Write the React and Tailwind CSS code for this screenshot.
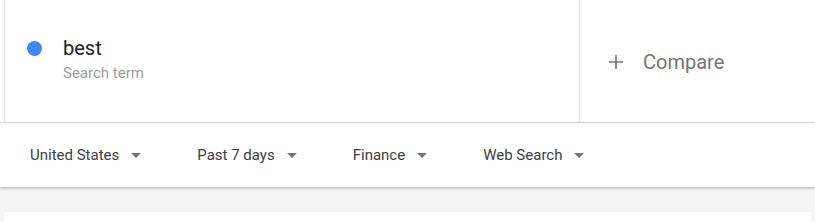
import React from "react";

function Arrow() {
  return (
    <svg width="10" height="5" viewBox="0 0 10 5" className="ml-[12px] shrink-0">
      <path d="M0 0 L10 0 L5 5 Z" fill="#757575" />
    </svg>
  );
}

function Filter({ label }) {
  return (
    <div className="flex items-center text-[15px] leading-[20px] text-[#3c4043]">
      <span>{label}</span>
      <Arrow />
    </div>
  );
}

export default function App() {
  return (
    <div className="w-[815px] h-[222px] overflow-hidden bg-white font-['Roboto',sans-serif]">
      <div className="flex h-[123px] border-b border-[#e0e0e0]">
        <div className="ml-[4px] w-[576px] border-l border-r border-[#e0e0e0] pl-[22px] pt-[36px]">
          <div className="flex items-center">
            <div className="w-[15px] h-[15px] rounded-full bg-[#4285f4] shrink-0" />
            <div className="ml-[21px] text-[20px] leading-[24px] text-[#212121]">best</div>
          </div>
          <div className="ml-[36px] mt-[3px] text-[15px] leading-[20px] text-[#9e9e9e]">Search term</div>
        </div>
        <div className="flex items-center pl-[29px] pt-[1px]">
          <svg width="14" height="14" viewBox="0 0 14 14" className="shrink-0">
            <path d="M7 0 V14 M0 7 H14" stroke="#757575" strokeWidth="1.6" />
          </svg>
          <span className="ml-[20px] text-[20px] leading-[24px] text-[#757575]">Compare</span>
        </div>
      </div>
      <div className="relative z-10 flex items-center h-[64px] pl-[30px] gap-[56px] bg-white shadow-[0_1px_3px_rgba(0,0,0,0.3)]">
        <Filter label="United States" />
        <Filter label="Past 7 days" />
        <Filter label="Finance" />
        <Filter label="Web Search" />
      </div>
      <div className="bg-[#f5f5f5] h-[40px] pt-[25px] px-[4px]">
        <div className="bg-white h-[20px]" />
      </div>
    </div>
  );
}
